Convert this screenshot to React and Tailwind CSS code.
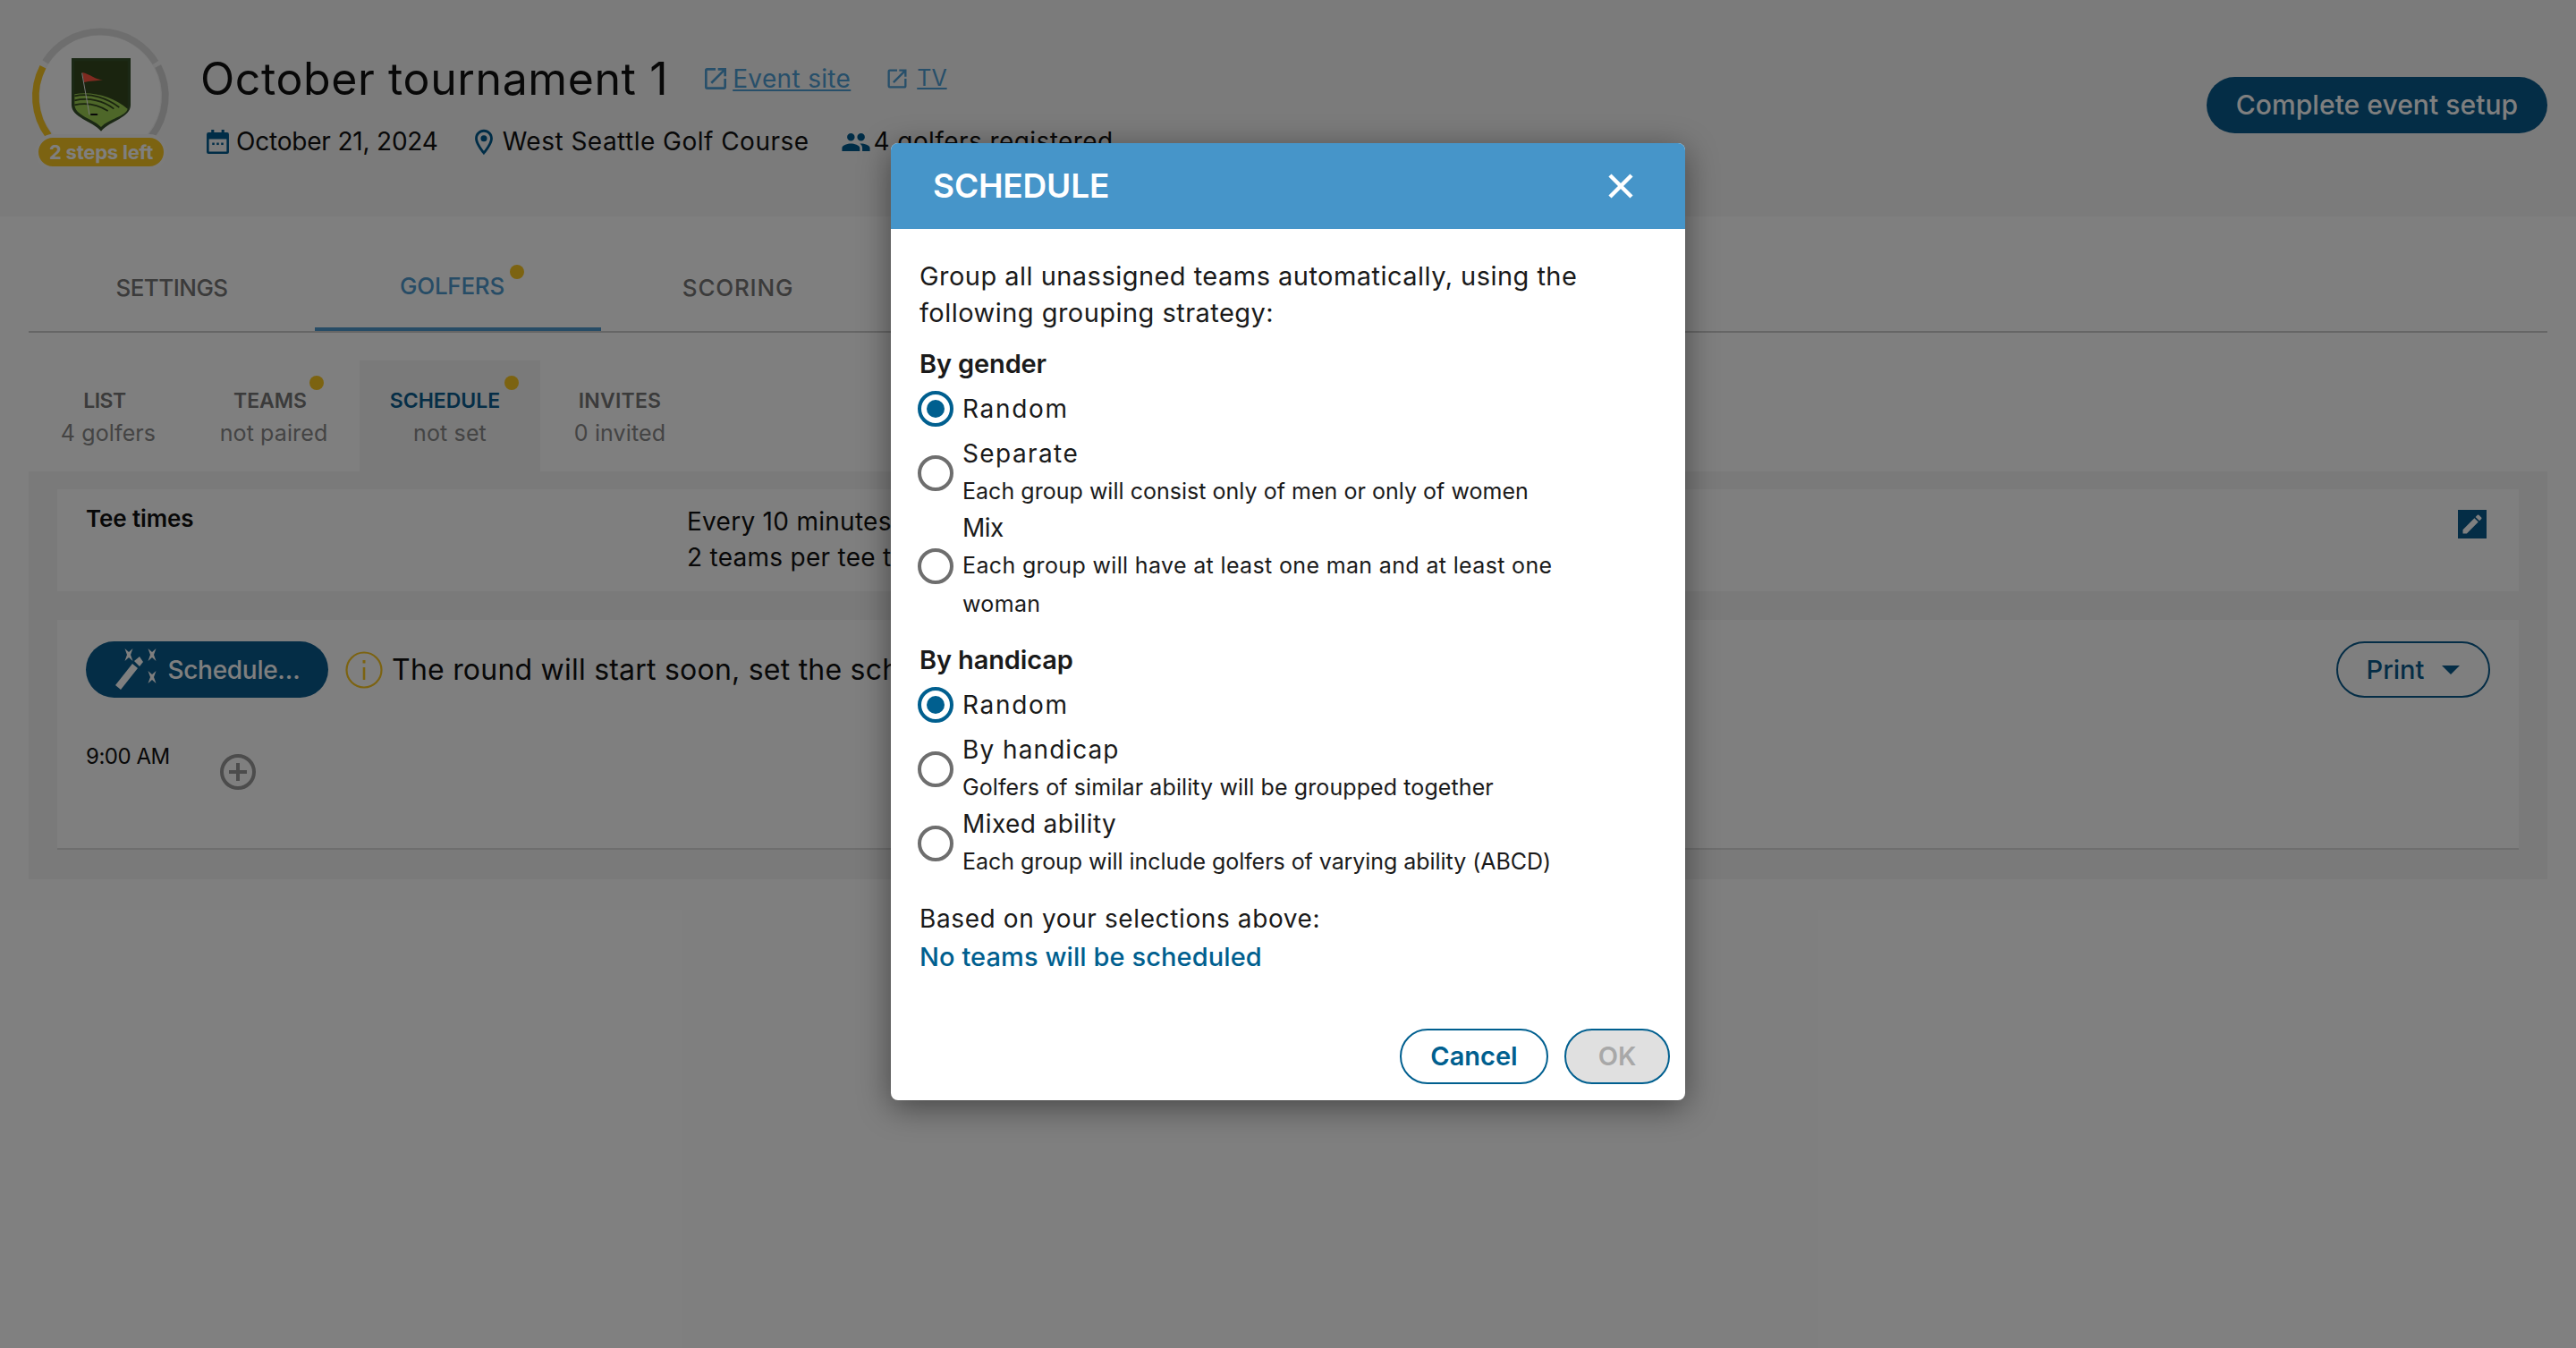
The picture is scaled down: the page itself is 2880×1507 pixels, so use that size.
import { MdOpenInNew, MdOutlineLocationOn, MdPeople, MdEdit } from 'react-icons/md';

const Radio = ({ checked }) => (
  <span className={`ml-[-2px] flex h-[40px] w-[40px] shrink-0 items-center justify-center rounded-full border-[4px] bg-white ${checked ? 'border-[#005f8f]' : 'border-[#6e6e6e]'}`}>
    {checked && <span className="h-[20px] w-[20px] rounded-full bg-[#005f8f]" />}
  </span>
);

const Option = ({ checked, title, desc, titleClass, descClass, className }) => (
  <div className={`flex items-center gap-[10px] ${className || ''}`}>
    <Radio checked={checked} />
    <div className="min-w-0">
      <div className={`text-[28px] leading-[41px] text-[#1a1a1a] ${titleClass}`}>{title}</div>
      {desc && <div className={`mb-[-1px] max-w-[700px] text-[25px] leading-[43px] text-[#1a1a1a] ${descClass}`}>{desc}</div>}
    </div>
  </div>
);

const Logo = () => (
  <svg viewBox="0 0 570 540" className="h-[180px] w-[190px]">
    <circle cx="276" cy="262" r="206" fill="#fff" stroke="#f4f4f4" strokeWidth="6" />
    <path d="M92 148 A218 218 0 0 1 462 150" fill="none" stroke="#dcdcdc" strokeWidth="23" />
    <path d="M84 164 A218 218 0 0 0 103 395" fill="none" stroke="#f9c623" strokeWidth="23" />
    <path d="M470 162 A218 218 0 0 1 448 397" fill="none" stroke="#d4d4d4" strokeWidth="23" />
    <path d="M180 135 H378 V292 C378 335 310 345 279 380 C248 345 180 335 180 292 Z" fill="#36502a" />
    <path d="M190 145 H368 V290 C368 328 305 338 279 366 C253 338 190 328 190 290 Z" fill="#34481f" />
    <path d="M190 256 C250 245 320 265 368 305 C362 330 305 338 279 366 C253 338 190 328 190 290 Z" fill="#9ccf52" />
    <path d="M190 262 C245 250 300 270 340 300 M190 277 C240 265 290 280 322 305 M190 292 C235 282 275 295 302 312" fill="none" stroke="#34481f" strokeWidth="5" />
    <path d="M216 183 C240 188 262 208 285 208 C265 212 240 212 222 216 Z" fill="#ff5440" />
    <path d="M215 185 L240 325" stroke="#f0f0f0" strokeWidth="3" />
    <rect x="243" y="321" width="25" height="6" rx="3" fill="#111" />
  </svg>
);

const Calendar = () => (
  <svg viewBox="0 0 24 26" className="h-[27px] w-[25px] shrink-0" fill="#005b8f">
    <path d="M5 0h3v3h8V0h3v3h3a2 2 0 0 1 2 2v19a2 2 0 0 1-2 2H2a2 2 0 0 1-2-2V5a2 2 0 0 1 2-2h3zM2.5 10v13.5h19V10z" />
    <rect x="6" y="14" width="2.4" height="2.4" />
    <rect x="10.8" y="14" width="2.4" height="2.4" />
    <rect x="15.6" y="14" width="2.4" height="2.4" />
  </svg>
);

const Star = ({ x, y }) => (
  <path transform={`translate(${x} ${y})`} d="M-4.5 -7 L0 -3 L4.5 -7 L2 0 L4.5 7 L0 3 L-4.5 7 L-2 0 Z" />
);

const Wand = () => (
  <svg viewBox="0 0 47 48" className="h-[48px] w-[47px] shrink-0" fill="#fff">
    <Star x={15} y={7} />
    <Star x={41} y={7} />
    <Star x={41} y={32} />
    <path d="M6 46 L0 41 L19 17 L25 22 Z" />
    <path d="M21 14 L27 9 L31 15 L27 20 Z" />
  </svg>
);

const Dot = ({ className }) => <span className={`absolute h-[16px] w-[16px] rounded-full bg-[#f9c623] ${className}`} />;

const SubTab = ({ label, sub, width, active, dot, labelClass }) => (
  <div className={`relative flex h-full flex-col items-center justify-center ${width} ${active ? 'bg-[#f4f4f4]' : ''}`}>
    <div className={`mt-[2px] text-[23px] font-semibold leading-[38px] ${labelClass} ${active ? 'text-[#0a5c8e]' : 'text-[#777]'}`}>{label}</div>
    <div className="mt-[-2px] text-[25px] leading-[38px] tracking-[0.005em] text-[#888]">{sub}</div>
    {dot}
  </div>
);

const App = () => {
  return (
    <div className="relative h-[1507px] w-[2880px] overflow-hidden bg-white font-['Inter',sans-serif] text-[#111]">
      {/* page */}
      <header className="flex h-[242px] items-start bg-[#f6f6f6] pl-[20px] pr-[32px]">
        <div className="relative mt-[20px] h-[180px] w-[190px] shrink-0">
          <Logo />
          <div className="absolute left-[19px] top-[130px] flex h-[40px] w-[148px] items-center justify-center rounded-full border-[4px] border-[#f8f8f8] bg-[#f9c623] text-[22px] font-bold tracking-[-0.01em] text-white">2 steps left</div>
        </div>
        <div className="ml-[14px] mt-[57px]">
          <div className="flex items-center">
            <h1 className="text-[50px] font-normal leading-[62px] tracking-[0.012em] text-[#111]">October tournament 1</h1>
            <a className="ml-[37px] flex items-center gap-[3px] text-[28px] tracking-[0.012em] text-[#4f9fd4] underline">
              <MdOpenInNew className="h-[32px] w-[32px]" />Event site
            </a>
            <a className="ml-[38px] flex items-center gap-[8px] text-[25px] text-[#4f9fd4] underline">
              <MdOpenInNew className="h-[28px] w-[28px]" />TV
            </a>
          </div>
          <div className="mt-[19px] flex items-center text-[28px] leading-[41px] text-[#111]">
            <span className="ml-[7px] flex items-center gap-[8px] tracking-[-0.007em]"><Calendar />October 21, 2024</span>
            <span className="ml-[34px] flex items-center gap-[4px] tracking-[0.017em]"><MdOutlineLocationOn className="h-[34px] w-[34px] text-[#005b8f]" />West Seattle Golf Course</span>
            <span className="ml-[35px] flex items-center gap-[3px] tracking-[0.015em]"><MdPeople className="h-[34px] w-[34px] text-[#005b8f]" />4 golfers registered</span>
          </div>
        </div>
        <button className="ml-auto mt-[86px] flex h-[63px] w-[381px] items-center justify-center rounded-full bg-[#095a8c] text-[30px] font-medium tracking-[0.002em] text-white">Complete event setup</button>
      </header>

      <main className="px-[32px]">
        <div className="mt-[30px] flex h-[100px] border-b-[2px] border-[#ccc]">
          <div className="flex h-[98px] w-[320px] items-center justify-center text-[26px] font-medium tracking-[-0.02em] text-[#777]">SETTINGS</div>
          <div className="relative flex h-[98px] w-[320px] items-center justify-center border-b-[4px] border-[#4e99cc] pr-[13px] text-[26px] font-medium tracking-[-0.01em] text-[#4e99cc]">
            GOLFERS
            <Dot className="left-[218px] top-[24px]" />
          </div>
          <div className="flex h-[98px] w-[306px] items-center justify-center text-[26px] font-medium tracking-[0.03em] text-[#777]">SCORING</div>
        </div>

        <div className="mt-[31px] flex h-[124px]">
          <SubTab label="LIST" sub="4 golfers" width="w-[178px]" labelClass="mr-[8px] tracking-[-0.02em]" />
          <SubTab label="TEAMS" sub="not paired" width="w-[192px]" labelClass="mr-[8px] tracking-[0em]" dot={<Dot className="left-[136px] top-[17px]" />} />
          <SubTab label="SCHEDULE" sub="not set" width="w-[202px]" active labelClass="mr-[11px] tracking-[0em]" dot={<Dot className="left-[162px] top-[17px]" />} />
          <SubTab label="INVITES" sub="0 invited" width="w-[178px]" labelClass="tracking-[0.01em]" />
        </div>

        <div className="bg-[#f4f4f4] px-[32px] pb-[33px] pt-[20px]">
          <div className="flex h-[114px] bg-[#fff] pl-[32px] pr-[36px]">
            <div className="mt-[12px] w-[672px] text-[26px] font-semibold leading-[41px] tracking-[-0.005em]">Tee times</div>
            <div className="mt-[16px] text-[28px] leading-[40px] tracking-[0.01em]">
              <div>Every 10 minutes, from 9:00 AM</div>
              <div>2 teams per tee time</div>
            </div>
            <button className="ml-auto mt-[23px] flex h-[32px] w-[32px] items-center justify-center bg-[#095a8c] text-white">
              <MdEdit className="h-[28px] w-[28px]" />
            </button>
          </div>

          <div className="mt-[32px] h-[257px] border-b-[2px] border-[#ddd] bg-white pl-[32px] pr-[32px] pt-[24px]">
            <div className="flex items-center">
              <button className="flex h-[63px] w-[271px] items-center justify-center gap-[11px] rounded-full bg-[#095a8c] pl-[2px] text-[28px] font-medium tracking-[-0.01em] text-white"><Wand />Schedule…</button>
              <svg viewBox="0 0 42 42" className="ml-[19px] h-[42px] w-[42px] shrink-0" fill="none" stroke="#f9c623" strokeWidth="2.2">
                <circle cx="21" cy="21" r="19.5" />
                <path d="M21 18v14" strokeWidth="2.6" />
                <path d="M21 10v3.5" strokeWidth="3" />
              </svg>
              <span className="ml-[10px] text-[32px] tracking-[0.007em]">The round will start soon, set the schedule</span>
              <button className="ml-auto flex h-[63px] w-[172px] items-center justify-center gap-[20px] rounded-full border-[2px] border-[#095a8c] text-[29px] font-medium text-[#095a8c]">
                Print
                <svg viewBox="0 0 20 10" className="h-[10px] w-[20px]" fill="#095a8c"><path d="M0 0h20L10 10z" /></svg>
              </button>
            </div>
            <div className="mt-[46px] flex">
              <span className="mt-[2px] w-[150px] text-[24px] leading-[36px] tracking-[-0.02em] text-[#111]">9:00 AM</span>
              <svg viewBox="0 0 40 40" className="mt-[17px] h-[40px] w-[40px] shrink-0" fill="none" stroke="#999" strokeWidth="4">
                <circle cx="20" cy="20" r="18" />
                <path d="M20 10v20M10 20h20" />
              </svg>
            </div>
          </div>
        </div>
      </main>

      {/* modal */}
      <div className="absolute inset-0 flex justify-center bg-black/50 pt-[160px]">
        <div className="h-[1070px] w-[888px] overflow-hidden rounded-[8px] bg-white shadow-[0_8px_36px_rgba(0,0,0,0.45)]">
          <div className="flex h-[96px] items-center justify-between bg-[#4695c9] pl-[47px] pr-[58px]">
            <span className="text-[37px] font-semibold tracking-[-0.005em] text-white">SCHEDULE</span>
            <svg viewBox="0 0 28 28" className="h-[28px] w-[28px]" fill="none" stroke="#fff" strokeWidth="4.5">
              <path d="M2 2L26 26M26 2L2 26" />
            </svg>
          </div>
          <div className="pl-[32px] pr-[17px] pt-[32px]">
            <p className="max-w-[790px] text-[29px] leading-[41px] tracking-[0.016em] text-[#1a1a1a]">Group all unassigned teams automatically, using the following grouping strategy:</p>
            <div className="mt-[16px] text-[29px] font-semibold leading-[41px] tracking-[-0.005em] text-[#1a1a1a]">By gender</div>
            <Option checked title="Random" titleClass="tracking-[0.06em]" className="mt-[10px] h-[40px]" />
            <Option title="Separate" titleClass="tracking-[0.05em]" desc="Each group will consist only of men or only of women" descClass="tracking-[0.001em]" className="mt-[10px]" />
            <Option title="Mix" titleClass="tracking-[-0.02em]" desc="Each group will have at least one man and at least one woman" descClass="tracking-[0.014em]" />
            <div className="mt-[21px] text-[29px] font-semibold leading-[41px] tracking-[-0.005em] text-[#1a1a1a]">By handicap</div>
            <Option checked title="Random" titleClass="tracking-[0.06em]" className="mt-[10px] h-[40px]" />
            <Option title="By handicap" titleClass="tracking-[0.038em]" desc="Golfers of similar ability will be groupped together" descClass="tracking-[0.004em]" className="mt-[10px]" />
            <Option title="Mixed ability" titleClass="tracking-[0.015em]" desc="Each group will include golfers of varying ability (ABCD)" descClass="tracking-[-0.002em]" />
            <div className="mt-[23px] text-[28px] leading-[41px] tracking-[0.022em] text-[#1a1a1a]">Based on your selections above:</div>
            <div className="mt-[1px] text-[29px] font-medium leading-[41px] tracking-[0.003em] text-[#005f8f]">No teams will be scheduled</div>
            <div className="mt-[60px] flex justify-end gap-[18px]">
              <button className="h-[62px] w-[166px] rounded-full border-[2px] border-[#005f8f] bg-white text-[29px] font-semibold text-[#005f8f]">Cancel</button>
              <button className="h-[62px] w-[118px] rounded-full border-[2px] border-[#005f8f] bg-[#e0e0e0] text-[29px] font-semibold text-[#a8a8a8]">OK</button>
            </div>
          </div>
        </div>
      </div>
    </div>
  );
};

export default App;
